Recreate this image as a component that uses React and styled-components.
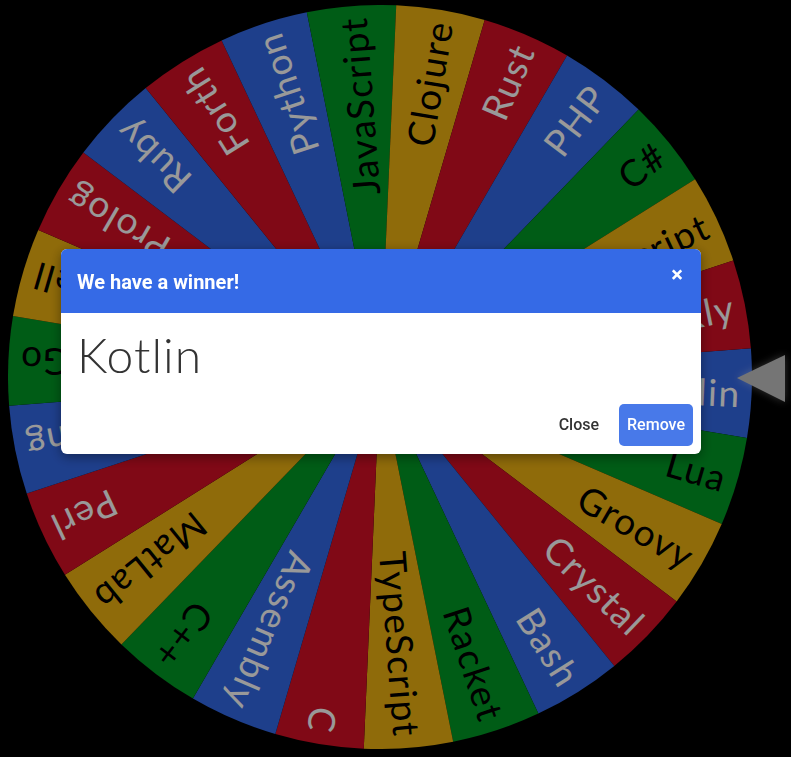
import React from 'react';
import styled, { createGlobalStyle } from 'styled-components';

const GlobalStyle = createGlobalStyle`
    html, body {
        margin: 0;
        padding: 0;
        background: #000;
        overflow: hidden;
    }
`;

const Stage = styled.div`
    position: relative;
    width: 791px;
    height: 757px;
    padding: 5px 0 0 8px;
    box-sizing: border-box;
    background: #000;
`;

const WheelSvg = styled.svg`
    display: block;
    width: 744px;
    height: 744px;
`;

const Pointer = styled.svg`
    position: absolute;
    left: 727px;
    top: 343px;
    width: 70px;
    height: 70px;
    filter: drop-shadow(0 0 4px rgba(255, 255, 255, 0.35));
`;

const Backdrop = styled.div`
    position: fixed;
    inset: 0;
    background: rgba(0, 0, 0, 0.4);
    display: flex;
    align-items: flex-start;
    justify-content: flex-start;
    padding: 249px 0 0 61px;
`;

const Dialog = styled.div`
    width: 640px;
    background: #fff;
    border-radius: 6px;
    overflow: hidden;
    box-shadow: 0 3px 12px rgba(0, 0, 0, 0.4);
    display: flex;
    flex-direction: column;
`;

const Header = styled.div`
    height: 64px;
    background: #356ae6;
    display: flex;
    align-items: center;
    justify-content: space-between;
    padding: 0 16px;
    box-sizing: border-box;
`;

const Title = styled.h2`
    margin: 0;
    color: #fff;
    font-family: Roboto, "Liberation Sans", sans-serif;
    font-weight: 700;
    font-size: 20px;
    padding-top: 1px;
`;

const CloseX = styled.button`
    border: none;
    background: none;
    color: #fff;
    font-family: Roboto, "Liberation Sans", sans-serif;
    font-size: 22px;
    font-weight: 700;
    line-height: 1;
    padding: 0;
    margin: -12px 2px 0 0;
    cursor: pointer;
`;

const Winner = styled.div`
    font-family: Lato, "Open Sans", sans-serif;
    font-weight: 300;
    font-size: 48px;
    color: #333;
    padding: 16px 16px 0 16px;
    line-height: 1.1;
    letter-spacing: 1px;
`;

const Footer = styled.div`
    display: flex;
    justify-content: flex-end;
    align-items: center;
    gap: 12px;
    padding: 22px 8px 8px;
`;

const Button = styled.button`
    font-family: Roboto, "Liberation Sans", sans-serif;
    font-weight: 500;
    font-size: 16px;
    height: 42px;
    padding: 0 8px;
    border: none;
    border-radius: 5px;
    cursor: pointer;
    color: ${props => props.primary ? "#fff" : "#333"};
    background: ${props => props.primary ? "#4879e9" : "transparent"};
`;

const BLUE = "#3369e8";
const RED = "#d50f25";
const YELLOW = "#eeb211";
const GREEN = "#009925";

const entries = [
    ["Kotlin", BLUE], ["Lua", GREEN], ["Groovy", YELLOW], ["Crystal", RED],
    ["Bash", BLUE], ["Racket", GREEN], ["TypeScript", YELLOW], ["C", RED],
    ["Assembly", BLUE], ["C++", GREEN], ["MatLab", YELLOW], ["Perl", RED],
    ["Erlang", BLUE], ["Go", GREEN], ["Shell", YELLOW], ["Prolog", RED],
    ["Ruby", BLUE], ["Forth", RED], ["Python", BLUE], ["JavaScript", GREEN],
    ["Clojure", YELLOW], ["Rust", RED], ["PHP", BLUE], ["C#", GREEN],
    ["CoffeeScript", YELLOW], ["Blockly", RED],
];

const R = 372;
const C = 372;
const STEP = 360 / entries.length;
const OFFSET = 2.5;

const point = (deg, r) => {
    const a = deg * Math.PI / 180;
    return [C + r * Math.cos(a), C + r * Math.sin(a)];
};

const Wheel = () => (
    <WheelSvg viewBox="0 0 744 744">
        {entries.map(([name, color], i) => {
            const mid = OFFSET + i * STEP;
            const [x1, y1] = point(mid - STEP / 2, R);
            const [x2, y2] = point(mid + STEP / 2, R);
            const light = color === BLUE || color === RED;
            return (
                <g key={name}>
                    <path d={`M${C},${C} L${x1},${y1} A${R},${R} 0 0 1 ${x2},${y2} Z`} fill={color} />
                    <text
                        x={C + 361}
                        y={C}
                        transform={`rotate(${mid} ${C} ${C})`}
                        textAnchor="end"
                        dominantBaseline="central"
                        fill={light ? "#fff" : "#000"}
                        fontFamily="Lato, 'Open Sans', sans-serif"
                        fontWeight="400"
                        fontSize="37"
                        letterSpacing="1.5"
                    >
                        {name}
                    </text>
                </g>
            );
        })}
    </WheelSvg>
);

const App = () => {
    return (
        <>
            <GlobalStyle />
            <Stage>
                <Wheel />
                <Pointer viewBox="0 0 70 70">
                    <polygon points="10,35 58,12 58,59" fill="#c4c4c4" />
                </Pointer>
            </Stage>
            <Backdrop>
                <Dialog>
                    <Header>
                        <Title>We have a winner!</Title>
                        <CloseX aria-label="close">×</CloseX>
                    </Header>
                    <Winner>Kotlin</Winner>
                    <Footer>
                        <Button>Close</Button>
                        <Button primary>Remove</Button>
                    </Footer>
                </Dialog>
            </Backdrop>
        </>
    );
};

export default App;
